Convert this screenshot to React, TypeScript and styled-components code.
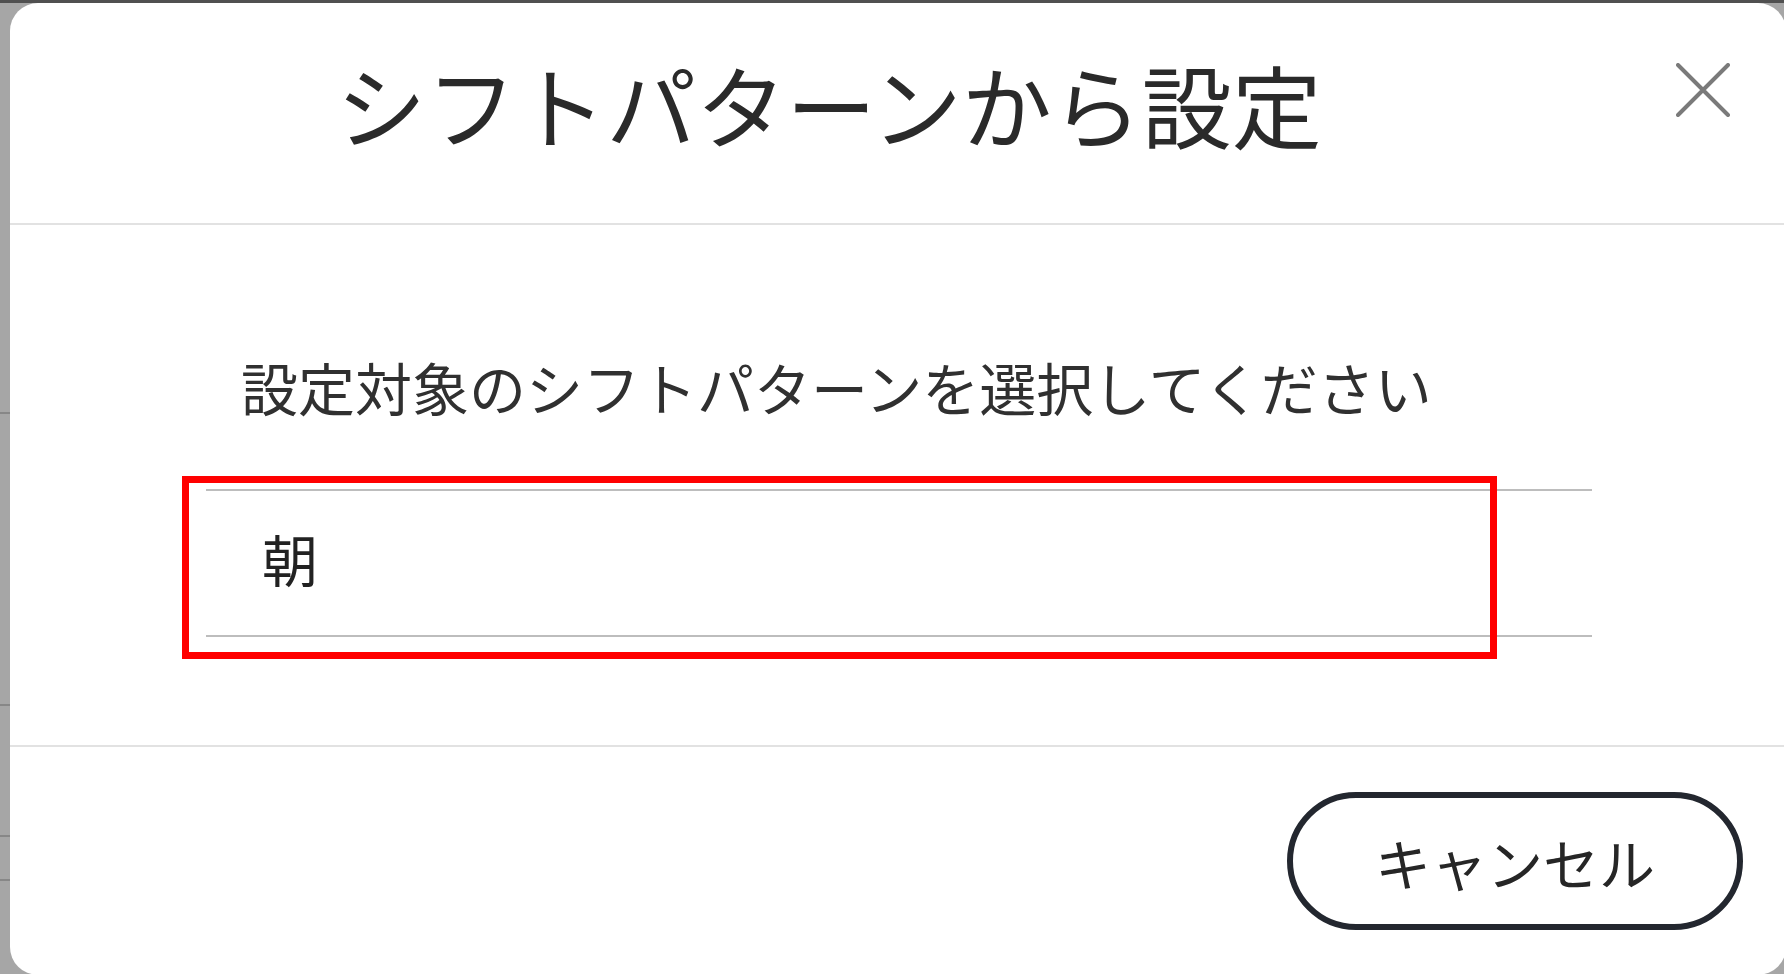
import styled, { createGlobalStyle } from "styled-components"

const GlobalStyle = createGlobalStyle`
  html, body {
    margin: 0;
    padding: 0;
    width: 1784px;
    height: 974px;
    overflow: hidden;
    background: #ffffff;
    font-family: "Noto Sans CJK JP", "Noto Sans", sans-serif;
  }
`

// page behind the dialog (only a sliver of it shows)
const BackPage = styled.div`
  display: flex;
  flex-direction: column;
  width: 1784px;
  height: 974px;
`

const BackHeader = styled.div`
  height: 3px;
  background: #7c7c7c;
`

const BackRow = styled.div<{ $h: number }>`
  height: ${p => p.$h}px;
  border-bottom: 2px solid #cfcfcf;
  box-sizing: border-box;
`

const Overlay = styled.div`
  position: fixed;
  inset: 0;
  background: rgba(0, 0, 0, 0.35);
`

const Modal = styled.div`
  position: fixed;
  top: 3px;
  left: 10px;
  width: 1776px;
  height: 972px;
  background: #ffffff;
  border-radius: 28px;
  display: flex;
  flex-direction: column;
  overflow: hidden;
`

const Header = styled.div`
  display: flex;
  align-items: center;
  height: 200px;
  padding-bottom: 20px;
  border-bottom: 2px solid #e2e2e2;
`

const Title = styled.h1`
  flex: 1;
  margin: 0;
  text-align: center;
  font-size: 90px;
  font-weight: 400;
  line-height: 1.4;
  color: #2a2a2a;
`

const CloseButton = styled.button`
  width: 110px;
  height: 54px;
  margin: 0 28px 26px 0;
  padding: 0;
  border: none;
  background: none;
  display: flex;
  align-items: center;
  justify-content: center;
  cursor: pointer;
`

const Body = styled.div`
  height: 520px;
  padding: 119px 194px 0 196px;
  box-sizing: border-box;
`

const Prompt = styled.p`
  margin: 0;
  padding-left: 35px;
  font-size: 57px;
  line-height: 84px;
  color: #303030;
`

const PatternList = styled.div`
  position: relative;
  margin-top: 61px;
`

const PatternItem = styled.div`
  display: flex;
  align-items: center;
  height: 134px;
  padding: 0 0 10px 56px;
  border-top: 2px solid #bdbdbd;
  border-bottom: 2px solid #bdbdbd;
  font-size: 56px;
  line-height: 84px;
  color: #222222;
`

// annotation frame drawn over the screenshot
const Highlight = styled.div`
  position: absolute;
  top: -13px;
  left: -24px;
  width: 1315px;
  height: 183px;
  border: 7px solid #ff0000;
  box-sizing: border-box;
  pointer-events: none;
`

const Footer = styled.div`
  flex: 1;
  display: flex;
  align-items: center;
  justify-content: flex-end;
  padding-right: 43px;
  border-top: 2px solid #e2e2e2;
`

const CancelButton = styled.button`
  width: 456px;
  height: 138px;
  border: 6px solid #23272f;
  border-radius: 69px;
  background: #ffffff;
  font-family: "Noto Sans CJK JP", "Noto Sans", sans-serif;
  font-size: 56px;
  color: #262626;
  cursor: pointer;
`

export default function App() {
  return (
    <>
      <GlobalStyle />
      <BackPage>
        <BackHeader />
        <BackRow $h={411} />
        <BackRow $h={292} />
        <BackRow $h={131} />
        <BackRow $h={44} />
      </BackPage>
      <Overlay />
      <Modal>
        <Header>
          <Title>シフトパターンから設定</Title>
          <CloseButton aria-label="閉じる">
            <svg width="54" height="54" viewBox="0 0 54 54">
              <path d="M2 2 L52 52 M52 2 L2 52" stroke="#7a7a7a" strokeWidth="4" strokeLinecap="round" />
            </svg>
          </CloseButton>
        </Header>
        <Body>
          <Prompt>設定対象のシフトパターンを選択してください</Prompt>
          <PatternList>
            <PatternItem>朝</PatternItem>
            <Highlight />
          </PatternList>
        </Body>
        <Footer>
          <CancelButton>キャンセル</CancelButton>
        </Footer>
      </Modal>
    </>
  )
}
